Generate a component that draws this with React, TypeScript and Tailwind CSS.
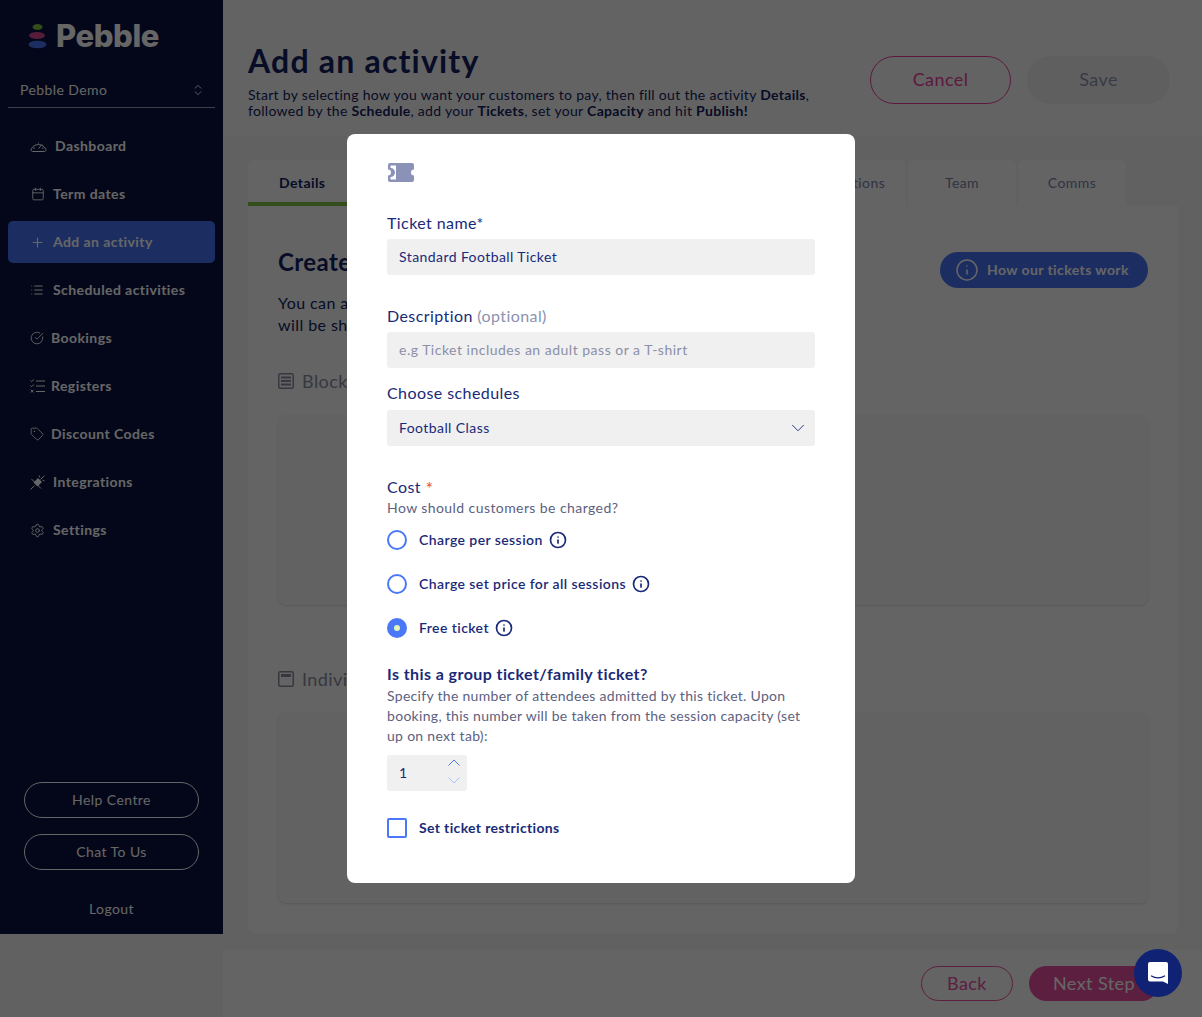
import { Calendar, ChevronDown, ChevronsUpDown, CircleCheckBig, Info, List, Plus, Settings, Tag } from 'lucide-react';

const navy = 'text-[#1a2a78]';

function GaugeIcon() {
  return (
    <svg width="17" height="14" viewBox="0 0 17 14" fill="none" stroke="currentColor" strokeWidth="1" className="shrink-0">
      <path d="M2.500 12.500h12a1.500 1.500 0 0 0 1.300-2.200 8 8 0 0 0-14.600 0 1.500 1.500 0 0 0 1.300 2.200z" />
      <path d="M8.500 9.500l3.500-4M3.500 9h1.500M12 9h1.500M8.500 3.500v1" />
    </svg>
  );
}

function RegistersIcon() {
  return (
    <svg width="15" height="14" viewBox="0 0 15 14" fill="none" stroke="currentColor" strokeWidth="1" className="shrink-0">
      <path d="M0.500 1.500l1.200 1.200L3.800 0.500M0.500 6.500l1.200 1.200 2.100-2.200M0.800 10.800l2.700 2.700M3.500 10.800l-2.700 2.700M6 2h9M6 7h9M6 12.500h9" />
    </svg>
  );
}

function PlugIcon() {
  return (
    <svg width="15" height="15" viewBox="0 0 15 15" fill="none" stroke="currentColor" strokeWidth="1" className="shrink-0">
      <path d="M0.500 14.500l4-4M10.500 4.500l4-4M1.500 4l9.500 9.500M9 0.500l1 2M14.500 6l-2-1" />
      <path d="M3.500 7.500L8 3l4 4-4.500 4.500z" fill="currentColor" stroke="none" />
    </svg>
  );
}

function NavItem({ icon, label, active, gap }: { icon: React.ReactNode; label: string; active?: boolean; gap: string }) {
  return (
    <div className={`flex h-[42px] items-center rounded-[5px] pl-[22px] text-[14px] font-bold text-white ${gap} ${active ? 'bg-[#4672f2]' : ''}`}>
      {icon}
      <span className="pb-[2px]">{label}</span>
    </div>
  );
}

function Sidebar() {
  return (
    <aside className="flex h-[934px] w-[223px] shrink-0 flex-col bg-[#09123f] px-2">
      <div className="flex h-[72px] items-center gap-[9px] pl-5">
        <svg width="19" height="25" viewBox="0 0 19 25">
          <ellipse cx="9.500" cy="3" rx="5" ry="3" fill="#7fc241" />
          <ellipse cx="9" cy="11.500" rx="8" ry="3.500" fill="#d6488f" />
          <ellipse cx="9.500" cy="20.500" rx="9" ry="3.800" fill="#4672f2" />
        </svg>
        <span className="font-['Inter'] text-[31px] leading-[36px] font-extrabold tracking-[-0.4px] text-white">Pebble</span>
      </div>
      <div className="flex h-[36px] items-center justify-between border-b border-white/60 pr-[10px] pl-3 text-[14px] text-white">
        <span>Pebble Demo</span>
        <ChevronsUpDown size={14} strokeWidth={1.5} />
      </div>
      <nav className="mt-[17px] flex flex-col gap-[6px]">
        <NavItem gap="gap-2" label="Dashboard" icon={<GaugeIcon />} />
        <NavItem gap="gap-[8px]" label="Term dates" icon={<Calendar size={14} strokeWidth={1.5} className="ml-px" />} />
        <NavItem active gap="gap-[8px]" label="Add an activity" icon={<Plus size={15} strokeWidth={1.75} />} />
        <NavItem gap="gap-[9px]" label="Scheduled activities" icon={<List size={14} strokeWidth={1.75} />} />
        <NavItem gap="gap-[7px]" label="Bookings" icon={<CircleCheckBig size={14} strokeWidth={1.5} />} />
        <NavItem gap="gap-[6px]" label="Registers" icon={<RegistersIcon />} />
        <NavItem gap="gap-[7px]" label="Discount Codes" icon={<Tag size={14} strokeWidth={1.5} />} />
        <NavItem gap="gap-2" label="Integrations" icon={<PlugIcon />} />
        <NavItem gap="gap-2" label="Settings" icon={<Settings size={15} strokeWidth={1.5} />} />
      </nav>
      <div className="mt-auto flex flex-col items-center gap-4 px-4 pb-[16px] text-[14px] text-white">
        <div className="flex h-[36px] w-full items-center justify-center rounded-full border border-white pb-[2px]">Help Centre</div>
        <div className="flex h-[36px] w-full items-center justify-center rounded-full border border-white pb-[2px]">Chat To Us</div>
        <div className="mt-[12px] h-[20px]">Logout</div>
      </div>
    </aside>
  );
}

function Tab({ label, active }: { label: string; active?: boolean }) {
  return (
    <div className={`flex h-[46px] w-[108px] items-center rounded-t-md bg-[#fafafa] text-[14px] ${active ? 'border-b-4 border-[#7fc241] pt-[2px] pl-[31px] font-bold text-[#13215f]' : 'justify-center pb-[2px] text-[#7b80a5]'}`}>
      {label}
    </div>
  );
}

function BlockIcon() {
  return (
    <svg width="16" height="16" viewBox="0 0 16 16" fill="none" stroke="#8a8d9e" strokeWidth="1.500">
      <rect x="0.750" y="0.750" width="14.500" height="14.500" rx="1.500" />
      <path d="M3 4.500h10M3 8h10M3 11.500h10" strokeWidth="2" />
    </svg>
  );
}

function SingleIcon() {
  return (
    <svg width="16" height="16" viewBox="0 0 16 16" fill="none" stroke="#8a8d9e" strokeWidth="1.500">
      <rect x="0.750" y="0.750" width="14.500" height="14.500" rx="1.500" />
      <path d="M3 4.500h10" strokeWidth="3" />
    </svg>
  );
}

function BehindCard({ label, icon }: { label: string; icon: React.ReactNode }) {
  return (
    <div>
      <div className="flex h-[26px] items-center gap-2 text-[18px] text-[#8a8d9e]">
        {icon}
        {label}
      </div>
      <div className="mt-[21px] h-[190px] rounded-lg bg-[#f6f6f6] shadow-sm" />
    </div>
  );
}

function Main() {
  return (
    <main className="flex min-w-0 flex-1 flex-col">
      <header className="flex h-[136px] items-start justify-between bg-[#f8f8f8] pt-[56px] pr-[32px] pl-[25px]">
        <div className="-mt-[15px]">
          <h1 className="text-[32px] leading-[40px] font-bold tracking-[1.2px] text-[#13215f]">Add an activity</h1>
          <p className="mt-[6px] text-[14px] leading-[16px] tracking-[0.3px] text-[#13215f]">
            Start by selecting how you want your customers to pay, then fill out the activity <b>Details</b>,<br />
            followed by the <b>Schedule</b>, add your <b>Tickets</b>, set your <b>Capacity</b> and hit <b>Publish!</b>
          </p>
        </div>
        <div className="flex gap-4 text-[18px]">
          <div className="flex h-[48px] w-[141px] items-center justify-center rounded-full border border-[#e8409a] pb-[2px] text-[#e8409a]">Cancel</div>
          <div className="flex h-[48px] w-[143px] items-center justify-center rounded-full bg-[#eeeeee] pb-[2px] text-[#8f91b0]">Save</div>
        </div>
      </header>
      <section className="bg-[#f2f2f2] pt-6 pr-6 pl-[25px]">
        <div className="flex gap-[2px]">
          <Tab active label="Details" />
          <Tab label="Schedule" />
          <Tab label="Tickets" />
          <Tab label="Capacity" />
          <Tab label="Extras" />
          <Tab label="Questions" />
          <Tab label="Team" />
          <Tab label="Comms" />
        </div>
        <div className="h-[728px] rounded-b-lg bg-[#fafafa] px-[30px] pt-[44px]">
          <div className="flex items-start justify-between">
            <h2 className="-mt-px text-[24px] leading-[26px] font-bold text-[#13215f]">Create your tickets</h2>
            <div className="mt-[2px] flex h-[36px] w-[208px] items-center gap-2 rounded-full bg-[#4672f2] pl-[16px] text-[14px] font-bold text-white">
              <Info size={24} strokeWidth={1.5} className="-ml-px" />
              <span className="pb-[2px]">How our tickets work</span>
            </div>
          </div>
          <p className="mt-1 text-[16px] leading-[22px] text-[#13215f]">
            You can add as many tickets as you like<br />will be shown on the booking page
          </p>
          <div className="mt-[32px] flex flex-col gap-[61px]">
            <BehindCard icon={<BlockIcon />} label="Block tickets" />
            <BehindCard icon={<SingleIcon />} label="Individual tickets" />
          </div>
        </div>
      </section>
      <footer className="mt-auto flex h-[67px] items-center justify-end gap-4 bg-[#fafafa] pr-[43px] text-[18px]">
        <div className="flex h-[35px] w-[92px] items-center justify-center rounded-full border border-[#e64e9e] text-[#e64e9e]">Back</div>
        <div className="flex h-[35px] w-[130px] items-center justify-center rounded-full bg-[#e64e9e] text-white">Next Step</div>
      </footer>
    </main>
  );
}

function Radio({ label, checked }: { label: string; checked?: boolean }) {
  return (
    <div className="flex h-5 items-center">
      {checked ? (
        <span className="flex h-5 w-5 items-center justify-center rounded-full bg-[#4a78f7]">
          <span className="h-[6px] w-[6px] rounded-full bg-[#e4f5b5]" />
        </span>
      ) : (
        <span className="h-5 w-5 rounded-full border-2 border-[#4a78f7]" />
      )}
      <span className={`ml-3 pb-[2px] text-[14px] font-semibold ${navy}`}>{label}</span>
      <Info size={18} strokeWidth={2.25} className={`ml-[6px] ${navy}`} />
    </div>
  );
}

function TicketIcon() {
  return (
    <svg width="26" height="19" viewBox="0 0 26 19" className="block" fill="#8b92b8">
      <path d="M2 0h22a2 2 0 0 1 2 2v4.500a3 3 0 0 0 0 6V17a2 2 0 0 1-2 2H2a2 2 0 0 1-2-2v-4.500a3 3 0 0 0 0-6V2a2 2 0 0 1 2-2zM2.500 2.500v2.500a4.500 4.500 0 0 1 0 9v2.500H8v-14z" fillRule="evenodd" />
    </svg>
  );
}

function Modal() {
  return (
    <div className="absolute top-[134px] left-[347px] z-20 w-[508px] rounded-lg bg-white px-10 pt-[29px] pb-[45px]">
      <div className="pl-px"><TicketIcon /></div>
      <label className={`mt-[31px] block text-[16px] leading-[20px] ${navy}`}>Ticket name*</label>
      <div className={`mt-[6px] flex h-[36px] items-center rounded-[3px] bg-[#f0f0f0] px-3 pb-[2px] text-[14px] ${navy}`}>Standard Football Ticket</div>
      <label className={`mt-[31px] block text-[16px] leading-[20px] ${navy}`}>
        Description <span className="text-[#8b92b0]">(optional)</span>
      </label>
      <div className="mt-[6px] flex h-[36px] items-center rounded-[3px] bg-[#f0f0f0] px-3 pb-[2px] text-[14px] tracking-[0.5px] text-[#8b8fa8]">e.g Ticket includes an adult pass or a T-shirt</div>
      <label className={`mt-[15px] block text-[16px] leading-[20px] ${navy}`}>Choose schedules</label>
      <div className={`mt-[7px] flex h-[36px] items-center justify-between rounded-[3px] bg-[#f0f0f0] pr-[6px] pl-3 text-[14px] ${navy}`}>
        <span className="pb-[2px]">Football Class</span>
        <ChevronDown size={22} strokeWidth={1} />
      </div>
      <label className={`mt-[31px] block text-[16px] leading-[20px] ${navy}`}>
        Cost <span className="align-[-2px] text-[18px] leading-none text-[#e8503a]">*</span>
      </label>
      <p className="mt-px text-[14px] leading-[20px] text-[#5d6180]">How should customers be charged?</p>
      <div className="mt-3 flex flex-col gap-6">
        <Radio label="Charge per session" />
        <Radio label="Charge set price for all sessions" />
        <Radio checked label="Free ticket" />
      </div>
      <h3 className={`mt-[26px] text-[16px] leading-[20px] font-bold ${navy}`}>Is this a group ticket/family ticket?</h3>
      <p className="mt-[2px] text-[14px] leading-[20px] tracking-[0.3px] text-[#5d6180]">
        Specify the number of attendees admitted by this ticket. Upon<br />
        booking, this number will be taken from the session capacity (set<br />
        up on next tab):
      </p>
      <div className={`mt-[9px] flex h-[36px] w-[80px] items-center justify-between rounded-[3px] bg-[#f0f0f0] pr-[7px] pl-3 text-[14px] ${navy}`}>
        <span className="pb-[2px]">1</span>
        <div className="mb-[3px] flex flex-col gap-[11px]">
          <svg width="12" height="7" viewBox="0 0 12 7" fill="none" stroke="#4a78f7" strokeWidth="1"><path d="M0.500 6.500L6 1l5.500 5.500" /></svg>
          <svg width="12" height="7" viewBox="0 0 12 7" fill="none" stroke="#a9c0fb" strokeWidth="1"><path d="M0.500 0.500L6 6l5.500-5.500" /></svg>
        </div>
      </div>
      <div className="mt-[27px] flex h-5 items-center">
        <span className="h-5 w-5 rounded-[2px] border-2 border-[#4a78f7]" />
        <span className={`ml-3 pb-[2px] text-[14px] font-bold tracking-[0.35px] ${navy}`}>Set ticket restrictions</span>
      </div>
    </div>
  );
}

function Messenger() {
  return (
    <div className="absolute top-[949px] left-[1134px] z-30 flex h-12 w-12 items-center justify-center rounded-full bg-[#0f2274]">
      <svg width="22" height="24" viewBox="0 0 22 24">
        <path d="M3 1h16a2 2 0 0 1 2 2v20l-5-2.500H3a2 2 0 0 1-2-2V3a2 2 0 0 1 2-2z" fill="#fff" />
        <path d="M4.500 15c3.500 2.400 9.500 2.400 13 0" fill="none" stroke="#0f2274" strokeWidth="1.300" strokeLinecap="round" />
      </svg>
    </div>
  );
}

export default function App() {
  return (
    <div className="relative flex h-[1017px] w-[1202px] overflow-hidden bg-[#f2f2f2] font-['Lato','Noto_Sans',sans-serif] tracking-[0.42px]">
      <Sidebar />
      <Main />
      <div className="absolute inset-0 z-10 bg-black/60" />
      <Modal />
      <Messenger />
    </div>
  );
}
